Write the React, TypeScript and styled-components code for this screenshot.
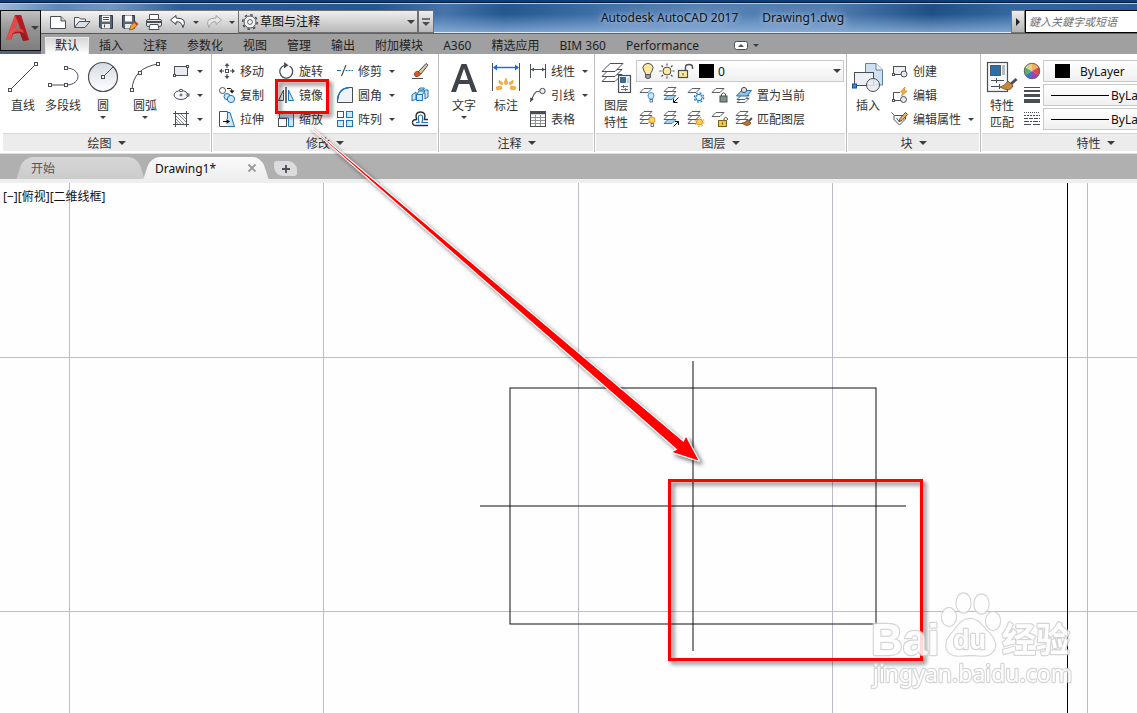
import React from "react";
import styled, { createGlobalStyle, css } from "styled-components";

const GlobalStyle = createGlobalStyle`
  *, *::before, *::after { box-sizing: border-box; }
  html, body { margin: 0; padding: 0; }
  body, button, input, select {
    font-family: "Noto Sans", "Noto Sans CJK SC", sans-serif;
    font-size: 12px;
  }
  button { border: 0; margin: 0; padding: 0; background: none; color: inherit; cursor: pointer; }
  svg { display: block; flex: none; }
`;

/* ---------- frame ---------- */
const Page = styled.div`
  position: relative;
  display: flex;
  flex-direction: column;
  min-height: 100vh;
  overflow: hidden;
  background: #fff;
  color: #222;
`;

const Header = styled.header`
  background:
    linear-gradient(180deg, #0f3d78 0 2px, #071a35 2px 3px, #b3cce8 3px 4px, transparent 4px),
    linear-gradient(180deg, transparent 0 14px, rgba(150, 185, 225, 0.75) 32px, #dce9f7 32px 33px, #54637a 33px),
    linear-gradient(100deg, #9db7d6 0, #5b86b8 60px, #7397c4 110px, #2d5d97 180px, #245690 370px, #4673aa 440px, #245690 500px, #3c6ca6 580px, #5580b3 680px, #4f7bb0 820px, #1f4f86 920px, #3467a0 1000px, #2a5a94 100%);
  padding-top: 10px;
`;

const HeaderMain = styled.div`
  display: flex;
`;

const AppButton = styled.button`
  display: flex;
  flex: none;
  align-items: center;
  width: 41px;
  height: 41px;
  padding: 0 0 6px 4px;
  gap: 1px;
  border: 1px solid #111;
  background: linear-gradient(180deg, #c0c0c0, #929292 50%, #7e7e7e);
`;

const HeaderColumn = styled.div`
  display: flex;
  flex: 1;
  flex-direction: column;
  min-width: 0;
`;

const TitleBar = styled.div`
  display: flex;
  height: 24px;
`;

const QuickAccess = styled.div`
  display: flex;
  flex: none;
  align-items: center;
  width: 197px;
  height: 24px;
  padding-left: 8px;
  gap: 6px;
  border-top: 1px solid #777;
  border-bottom: 1px solid #54585e;
  background: linear-gradient(180deg, #f4f4f4, #bdbdbd);
`;

const Workspace = styled.label`
  display: flex;
  flex: none;
  align-items: center;
  width: 180px;
  height: 23px;
  padding: 0 2px;
  gap: 1px;
  border: 1px solid #6f6f6f;
  background: linear-gradient(180deg, #eee, #b9b9b9);
`;

const PlainSelect = styled.select`
  flex: 1;
  min-width: 0;
  height: 18px;
  padding: 0;
  border: 0;
  outline: 0;
  appearance: none;
  background: transparent;
  color: #111;
`;

const CustomizeButton = styled.button`
  display: flex;
  flex: none;
  align-items: center;
  justify-content: center;
  width: 16px;
  height: 23px;
  border: 1px solid #6f6f6f;
  background: linear-gradient(180deg, #eee, #b9b9b9);
`;

const WindowTitle = styled.div`
  display: flex;
  flex: 1;
  justify-content: center;
  min-width: 0;
  gap: 24px;
  line-height: 16px;
  color: #0a1420;
  white-space: nowrap;
  text-shadow: 0 0 5px rgba(255, 255, 255, 0.6), 0 0 12px rgba(255, 255, 255, 0.6);
`;

const SearchArea = styled.div`
  display: flex;
  flex: none;
  width: 126px;
  height: 23px;
`;

const SearchToggle = styled.button`
  display: flex;
  align-items: center;
  justify-content: center;
  width: 14px;
  border: 1px solid #777;
  background: linear-gradient(180deg, #eee, #b4b4b4);
`;

const SearchInput = styled.input`
  flex: 1;
  min-width: 0;
  padding: 0 3px;
  border: 1px solid #000;
  border-right: 0;
  outline: 0;
  background: #fff;
  font-size: 11px;
  font-style: italic;
  &::placeholder { color: #6d6d6d; }
`;

const TabRow = styled.nav`
  display: flex;
  align-items: flex-end;
  height: 20px;
  padding-left: 4px;
  background: #a0a0a0;
`;

const RibbonTab = styled.button<{ $active?: boolean }>`
  flex: none;
  height: 17px;
  padding: 0 10px;
  line-height: 16px;
  color: #1f1f1f;
  ${(p) => p.$active && css`
    border: 1px solid #e9e9e9;
    border-bottom: 0;
    padding: 0 9px;
    background: linear-gradient(180deg, #d6d6d6, #fff);
  `}
`;

const MinimizeButton = styled.button`
  display: flex;
  align-items: center;
  height: 17px;
  margin-left: 25px;
  gap: 5px;
`;

/* ---------- ribbon ---------- */
const Ribbon = styled.section`
  display: flex;
  height: 100px;
  padding: 0 0 0 2px;
  overflow: hidden;
  border-bottom: 1px solid #dedede;
  background: #fff;
`;

const Panel = styled.section<{ $width: number }>`
  display: flex;
  flex: none;
  flex-direction: column;
  width: ${(p) => p.$width}px;
  height: 98px;
  border-right: 1px solid #bdbdbd;
`;

const PanelBody = styled.div`
  display: flex;
  height: 79px;
  padding: 5px 0 0 4px;
`;

const PanelFooter = styled.button`
  display: flex;
  align-items: center;
  justify-content: center;
  height: 18px;
  margin: 0 1px;
  gap: 6px;
  border-top: 1px solid #d6d6d6;
  background: #ececec;
  color: #333;
`;

const Caret = styled.span<{ $size?: number }>`
  flex: none;
  width: 0;
  height: 0;
  border: ${(p) => p.$size ?? 3}px solid transparent;
  border-top-color: #3a3f45;
  border-bottom: 0;
`;

const BigButton = styled.button<{ $width: number }>`
  display: flex;
  flex: none;
  flex-direction: column;
  align-items: center;
  width: ${(p) => p.$width}px;
  color: #333;
`;

const BigLabel = styled.span`
  margin: 3px 0 2px;
  line-height: 17px;
  white-space: pre;
`;

const Column = styled.div<{ $width?: number; $indent?: number }>`
  display: flex;
  flex: none;
  flex-direction: column;
  width: ${(p) => (p.$width ? `${p.$width}px` : "auto")};
  padding-left: ${(p) => p.$indent ?? 0}px;
`;

const SmallButton = styled.button`
  display: flex;
  align-items: center;
  height: 24px;
  gap: 4px;
  color: #333;
  white-space: nowrap;
  ${Caret} { margin-left: 3px; }
`;

const IconRow = styled.div`
  display: flex;
  align-items: center;
  height: 24px;
  padding-left: 3px;
  gap: 6px;
`;

const ComboRow = styled.div`
  display: flex;
  align-items: center;
  height: 24px;
  gap: 2px;
`;

const Combo = styled.label<{ $width: number }>`
  display: flex;
  flex: none;
  align-items: center;
  width: ${(p) => p.$width}px;
  height: 22px;
  padding: 0 2px;
  gap: 1px;
  border: 1px solid #c9c9c9;
  background: linear-gradient(180deg, #fff, #f0f0f0);
`;

const Swatch = styled.span<{ $wide?: boolean }>`
  flex: none;
  width: 15px;
  height: 14px;
  margin: ${(p) => (p.$wide ? "0 9px" : "0 3px")};
  background: #000;
`;

const LineSample = styled.span`
  flex: none;
  width: 58px;
  height: 1px;
  margin: 0 1px 0 5px;
  background: #000;
`;

/* ---------- document tabs ---------- */
const DocumentTabs = styled.nav`
  display: flex;
  align-items: flex-end;
  height: 29px;
  padding-left: 17px;
  border-bottom: 4px solid #eee;
  background: #b0b0b0;
`;

const DocumentTab = styled.div<{ $active?: boolean }>`
  position: relative;
  z-index: ${(p) => (p.$active ? 2 : 1)};
  display: flex;
  align-items: center;
  justify-content: space-between;
  width: ${(p) => (p.$active ? 124 : 127)}px;
  height: 22px;
  padding: 0 11px 0 ${(p) => (p.$active ? 11 : 14)}px;
  color: ${(p) => (p.$active ? "#111" : "#555")};
  &::before, &::after {
    content: "";
    position: absolute;
    z-index: -1;
    inset: 0 14px 0 3px;
    border-radius: 9px 9px 0 0;
    background: ${(p) => (p.$active ? "linear-gradient(180deg, #fafafa, #eee)" : "linear-gradient(180deg, #d6d6d6, #cbcbcb)")};
    transform: skewX(-18deg);
  }
  &::after {
    inset: 0 3px 0 14px;
    transform: skewX(18deg);
  }
`;

const NewTab = styled.button`
  display: flex;
  align-items: center;
  justify-content: center;
  width: 23px;
  height: 15px;
  margin: 0 0 3px 6px;
  border-radius: 3px 9px 3px 9px;
  background: #dcdcdc;
`;

/* ---------- drawing area ---------- */
const Canvas = styled.main`
  position: relative;
  flex: 1;
  min-height: 530px;
  background: #fefefe;
`;

const ViewControls = styled.div`
  position: absolute;
  top: 5px;
  left: 3px;
  display: flex;
  line-height: 18px;
  color: #111;
`;

const Drawing = styled.svg`
  position: absolute;
  inset: 0;
  width: 100%;
  height: 100%;
`;

const Overlay = styled.svg`
  position: absolute;
  z-index: 5;
  inset: 0;
  width: 100%;
  height: 100%;
  pointer-events: none;
`;

/* ---------- icons ---------- */
const D = "#4a4f56";
const B = "#1b74b8";
const LB = "#cfe6f5";

type IconProps = { w?: number; h?: number; children: React.ReactNode };
const Icon = ({ w = 18, h = 18, children }: IconProps) => (
  <svg width={w} height={h} viewBox={`0 0 ${w} ${h}`} fill="none" stroke={D} strokeWidth="1" aria-hidden="true">
    {children}
  </svg>
);
const Node = ({ x, y, s = 3 }: { x: number; y: number; s?: number }) => (
  <rect x={x - s / 2} y={y - s / 2} width={s} height={s} fill="#fff" strokeWidth="1" />
);
const Sheet = ({ x = 0, y = 0, fill = "#fff", stroke = D }: { x?: number; y?: number; fill?: string; stroke?: string }) => (
  <path d={`M${x + 1} ${y + 4.5}L${x + 5} ${y + 0.5}H${x + 13}L${x + 9} ${y + 4.5}Z`} fill={fill} stroke={stroke} strokeWidth=".9" />
);
const Stack = ({ blue }: { blue?: boolean }) => (
  <>
    <Sheet y={9} fill={blue ? "#a9d2ef" : "#fff"} stroke={blue ? B : D} />
    <Sheet y={5} />
    <Sheet y={1} />
  </>
);

const LogoA = () => (
  <svg width="25" height="28" viewBox="0 0 25 28" aria-hidden="true">
    <path d="M1 26L10 1H16L24 26L18 27L15 19L8 20L6 26Z" fill="#c5262b" />
    <path d="M10 1L13 8L6 26L1 26Z" fill="#e2494a" />
    <path d="M10 1H16L24 26L19 24L13 8Z" fill="#b31b21" />
    <path d="M6 26L8 18Q15 14 20 20L24 26L18 27L15 19Q11 18 8 20Z" fill="#9b1a20" />
    <path d="M9 16L13 8L15 15Q12 14 9 16Z" fill="#8f7576" />
    <path d="M4 20Q10 11 18 16L19 19Q11 15 3 23Z" fill="#e85c58" opacity=".65" />
  </svg>
);

const I = {
  fresh: <Icon><path d="M1.500 3.500H12L16.500 8V15.500H1.500Z" fill="#fff" /><path d="M12 3.500V8H16.500" fill="#ccd2d9" /></Icon>,
  open: <Icon><path d="M1.500 14.500V4.500H6L7.500 6H12.500V8.500" fill="#f3f5f7" /><path d="M1.500 14.500L6 8.500H17L12 14.500Z" fill="#d9dfe6" /></Icon>,
  save: <Icon><path d="M2.500 2.500H15.500V15.500H4L2.500 14Z" fill="#5a6673" stroke="#333a42" /><rect x="5" y="2.500" width="8" height="6" fill="#fff" stroke="none" /><rect x="5" y="11" width="8" height="4.500" fill="#e6ecf1" stroke="none" /><path d="M7.500 11.500V14.500M6 4.500H12M6 6.500H12" /></Icon>,
  saveAs: <Icon><path d="M1.500 2.500H13.500V15.500H3L1.500 14Z" fill="#5a6673" stroke="#333a42" /><rect x="4" y="2.500" width="7" height="6" fill="#fff" stroke="none" /><rect x="4" y="11" width="7" height="4.500" fill="#e6ecf1" stroke="none" /><path d="M8.500 17L9.500 13L14 8.500L17 11L12.500 16Z" fill="#f1a12c" stroke="#815010" strokeWidth=".8" /><path d="M14 8.500L17 11L15.800 12.200L12.800 9.700Z" fill="#b5433c" stroke="none" /></Icon>,
  print: <Icon><path d="M4.500 7V1.500H13.500V7" fill="#fff" /><rect x="1.500" y="6.500" width="15" height="7" rx="1.500" fill="#dfe4e9" /><path d="M2 9H16" strokeWidth="2" /><path d="M5 11.500H13L14 16.500H4Z" fill="#fff" /></Icon>,
  undo: <Icon><path d="M7 2.500L1.500 7L7 11.500V9Q12 7.500 14 14.500Q19 5 7 5Z" fill="#fff" stroke="#333a42" /></Icon>,
  redo: <Icon><g stroke="#a2a2a2"><path d="M11 2.500L16.500 7L11 11.500V9Q6 7.500 4 14.500Q-1 5 11 5Z" fill="#e7e7e7" /></g></Icon>,
  gear: <Icon><circle cx="9" cy="9" r="7.300" strokeDasharray="2.600 3.130" strokeWidth="1.600" /><circle cx="9" cy="9" r="6" fill="#f2f2f2" strokeWidth=".9" /><circle cx="9" cy="9" r="2.400" fill="#fff" strokeWidth=".9" /></Icon>,

  line: <Icon w={34} h={35}><path d="M4 31L30 5" /><Node x={4} y={31} /><Node x={30} y={5} /></Icon>,
  pline: <Icon w={34} h={35}><path d="M4 26H20M20 9C36 9 36 26 20 26" /><Node x={4} y={26} /><Node x={20} y={26} /><Node x={20} y={9} /></Icon>,
  circle: (
    <Icon w={34} h={35}>
      <defs><linearGradient id="disc" x2="0" y2="1"><stop stopColor="#d5dbe2" /><stop offset="1" stopColor="#fff" /></linearGradient></defs>
      <circle cx="17" cy="18" r="14.500" fill="url(#disc)" strokeWidth="1.200" /><path d="M17 18L27 8" /><Node x={17} y={18} />
    </Icon>
  ),
  arc: <Icon w={34} h={35}><path d="M4 31Q5 9 30 5" /><Node x={4} y={31} /><Node x={12} y={14} /><Node x={30} y={5} /></Icon>,
  rect: <Icon><rect x="2.500" y="4.500" width="13" height="9" fill="#e8ebef" /><Node x={2.5} y={13.5} s={2} /><Node x={15.5} y={4.5} s={2} /></Icon>,
  ellipse: <Icon><ellipse cx="9" cy="9" rx="7" ry="4.500" fill="#f4f6f8" /><path d="M7.500 9H10.500M9 7.500V10.500" /><Node x={9} y={4.5} s={2} /><Node x={16} y={9} s={2} /></Icon>,
  hatch: <Icon><path d="M3.500 1V17M14.500 1V17M1 3.500H17M1 14.500H17" /><path d="M4 6L12 14M4 9L9 14M6 4L14 12M9 4L14 9M4 12L6 14" strokeWidth=".7" /></Icon>,

  move: <Icon><rect x="7.500" y="7.500" width="3" height="3" fill="#fff" /><path d="M9 6V3M9 12V15M6 9H3M12 9H15" strokeWidth="1.200" /><path d="M6.500 4L9 1L11.500 4ZM6.500 14L9 17L11.500 14ZM4 6.500L1 9L4 11.500ZM14 6.500L17 9L14 11.500Z" fill={D} stroke="none" /></Icon>,
  copy: <Icon><circle cx="4.500" cy="4.500" r="3" fill="#fff" /><path d="M9 2.500H12.500Q14 3 14 5" stroke="#111" /><path d="M11.500 4.500H16.500L14 7.500Z" fill="#111" stroke="none" /><g stroke={B} fill={LB}><circle cx="9" cy="10.500" r="3" /><circle cx="13" cy="13" r="3.600" /></g></Icon>,
  stretch: <Icon><path d="M8.500 2.500H12L16.500 16.500H8.500Z" fill={LB} stroke={B} /><path d="M9.500 1.500H1.500V16.500H9.500" fill="#fff" /><path d="M9.500 1.500V9" stroke={B} /><path d="M5 11.500H9" stroke="#111" /><path d="M8.500 9L12 11.500L8.500 14Z" fill="#111" stroke="none" /></Icon>,
  rotate: <Icon><path d="M7 3.500A6.500 6.500 0 1 0 12.500 4" strokeWidth="1.300" /><path d="M7 0L11.500 3.200L7 6.500Z" fill={D} stroke="none" /></Icon>,
  mirror: <Icon><path d="M6.500 4V14.500H1.500Z" fill="#f2f2f2" /><path d="M11.500 4V14.500H16.500Z" fill={LB} stroke={B} /><path d="M9 1V17" stroke="#111" strokeWidth="1.200" /></Icon>,
  scale: <Icon><path d="M2.500 2.500H16.500V16.500H11.500V8H2.500Z" fill={LB} stroke={B} /><rect x="1.500" y="8.500" width="8" height="8" fill="#fff" /></Icon>,
  trim: <Icon><path d="M1 8.500H5" stroke={B} /><path d="M5.500 14L10 3" strokeWidth="1.200" /><path d="M9.500 8.500H17" strokeDasharray="2 1" stroke={B} /></Icon>,
  fillet: <Icon><path d="M1.500 16.500V14Q2.500 2.500 13 1.500H16.500V16.500Z" fill="#f0f2f5" /><path d="M1.500 14Q2.500 2.500 13 1.500" stroke={B} strokeWidth="1.400" /></Icon>,
  array: <Icon><rect x="1.500" y="1.500" width="6" height="6" fill="#fff" /><g stroke={B} fill={LB}><rect x="10.500" y="1.500" width="6" height="6" /><rect x="1.500" y="10.500" width="6" height="6" /><rect x="10.500" y="10.500" width="6" height="6" /></g></Icon>,
  erase: <Icon><path d="M7 10L15 1.500L17 3L10 12Z" fill="#dac59b" /><path d="M3.500 11Q5 8.500 7.500 9.500L9.500 12Q8 15.500 4.500 14.500Q2.500 13 3.500 11Z" fill="#d25a25" stroke="#8d3616" strokeWidth=".8" /><path d="M1 16.500H12" /></Icon>,
  explode: <Icon><g stroke={B} fill={LB}><path d="M11 7L13.500 4H17V11L14 13V7Z" /><path d="M5.500 8.500H11.500V14.500H5.500ZM5.500 8.500L8 5H14L11.500 8.500" /><path d="M1 9L5 6V13L1 15ZM7 4L9 2H13.500L12 4Z" /></g></Icon>,
  offset: <Icon><path d="M1.500 12.500Q1.500 9.500 5.500 9.500Q3.500 2 9.500 2Q15.500 2 13.500 9.500H17" stroke="#2c3036" strokeWidth="1.400" /><path d="M1.500 12.500Q1.500 15.500 5 15.500H17" stroke="#2c3036" strokeWidth="1.400" /><path d="M5 12.500H8Q6 5 9.500 5Q13 5 11 12.500H17" stroke={B} strokeWidth="1.200" /></Icon>,

  text: <Icon w={34} h={35}><path d="M4 33L14.500 5H19.500L30 33H25L22.200 25H11.800L9 33ZM13 21H21L17 9.500Z" fill="#3f444b" stroke="none" fillRule="evenodd" /></Icon>,
  dim: <Icon w={34} h={35}><path d="M3.500 4V32M30.500 4V32" /><path d="M5 8.500H29" stroke="#1668e8" strokeWidth="1.400" /><path d="M4 8.500L8 5.500V11.500ZM30 8.500L26 5.500V11.500Z" fill="#1668e8" stroke="none" /><path d="M17 19L19 24L17 26L15 24ZM10 21L14 24L13 26L10 24ZM24 21L20 24L21 26L24 24ZM7 28L12 27L13 30L8 31ZM27 28L22 27L21 30L26 31Z" fill="#f2b244" stroke="#e58c1e" strokeWidth=".5" /></Icon>,
  linear: <Icon><path d="M1.500 2V16M16.500 2V16M2 7.500H16" /><path d="M2 7.500L5 5.500V9.500ZM16 7.500L13 5.500V9.500Z" fill={D} stroke="none" /></Icon>,
  leader: <Icon><circle cx="13.500" cy="5" r="2.700" fill="#eee" /><path d="M2.500 14Q5.500 6 8 5.500H10.500" strokeWidth="1.200" /><path d="M1 16.500L1.200 11.500L4.800 13Z" fill={D} stroke="none" /></Icon>,
  table: <Icon><rect x="1.500" y="1.500" width="15" height="15" fill="#fff" /><path d="M1.500 3H16.500" strokeWidth="2.500" /><path d="M2 7.500H16M2 10.500H16M2 13.500H16M6.500 5V16M11.500 5V16" stroke="#8d939a" /></Icon>,

  layers: <Icon w={34} h={35}><g fill="#fff"><path d="M3 22.500L10 15.500H23L16 22.500Z" /><path d="M3 17.500L10 10.500H23L16 17.500Z" /><path d="M3 12.500L11 4.500H24L16 12.500Z" /></g><rect x="19.500" y="16.500" width="12" height="17" fill="#f6f8fa" strokeWidth="1.200" /><rect x="21.500" y="18.500" width="5" height="5" fill={B} strokeWidth=".8" /><path d="M29 19V24" stroke="#9da7b0" /><path d="M22 27.500H29M22 30.500H29M24.500 26V29M26.500 29V32" strokeWidth=".8" /></Icon>,
  bulb: <Icon><path d="M6.500 12.500Q6.500 11 5 9Q2.500 5 5.500 2.500Q9 0 12.500 2.500Q15.500 5 13 9Q11.500 11 11.500 12.500Z" fill="#ffe79b" /><path d="M6.500 12.500H11.500V15.500Q9 18 6.500 15.500Z" fill="#999" strokeWidth=".9" /></Icon>,
  sun: <Icon><circle cx="9" cy="9" r="4" fill="#ffe79b" /><path d="M9 1.500V3.500M9 14.500V16.500M1.500 9H3.500M14.500 9H16.500M3.500 3.500L5 5M13 13L14.500 14.500M3.500 14.500L5 13M13 5L14.500 3.500" strokeWidth="1.200" /></Icon>,
  unlock: <Icon><rect x="1.500" y="8.500" width="9" height="7" fill="#ffe79b" strokeWidth="1.200" /><path d="M8.500 8V5Q8.500 2.500 12 2.500Q15.500 2.500 15.500 5V7" strokeWidth="1.400" /><path d="M6 11V13.500" /></Icon>,
  layOff: <Icon><Sheet y={2} /><path d="M10.500 13Q8 10 9.500 7.500Q12 5.500 14.500 7.500Q16 10 13.500 13Z" fill="#cde6fb" stroke="#3b8ed0" /><path d="M11 13.500H13.500V16H11Z" strokeWidth=".8" /></Icon>,
  layIso: <Icon><Stack blue /><path d="M15.500 11.500L11 16M10.500 12.500V16.500H14.500" stroke="#111" /></Icon>,
  layFreeze: <Icon><Sheet y={2} /><g stroke={B} fill="#e5f2fc"><circle cx="12" cy="11.500" r="4.700" strokeDasharray="1.800 1.900" strokeWidth="1.200" /><circle cx="12" cy="11.500" r="3.200" /></g></Icon>,
  layLock: <Icon><Sheet y={2} /><path d="M10.500 10V8Q12.500 5.500 14.500 8V10" /><rect x="9" y="10" width="7" height="6" fill="#7d9286" /></Icon>,
  layCurrent: <Icon><Sheet x={1} y={12} /><Sheet x={1} y={9} /><path d="M1.500 10L6.500 4.500H16.500L12 10Z" fill="#8fc6ec" stroke={B} /><circle cx="9" cy="4" r="2.600" fill="#dce4ea" /></Icon>,
  layOn: <Icon><Stack /><path d="M11.500 13Q9 10.500 10.500 8Q13 6 15.500 8Q17 10.500 14.500 13Z" fill="#ffd45f" stroke="#e8901a" /><path d="M12 13.500H14.500V16.500H12Z" strokeWidth=".8" /></Icon>,
  layUniso: <Icon><Stack blue /><path d="M10.500 16.500L15.500 11.500M12 11.500H15.500V15" stroke="#111" /></Icon>,
  layThaw: <Icon><Stack /><circle cx="12.500" cy="12" r="4.500" stroke="#e08a1c" strokeDasharray="1.500 2.030" /><circle cx="12.500" cy="12" r="3" fill="#ffd74f" stroke="#e08a1c" /></Icon>,
  layUnlock: <Icon><Sheet y={2} /><path d="M13 10.500V8.500Q14.500 6 16.500 8.500V10" /><rect x="7.500" y="10.500" width="8" height="6" fill="#f4c440" stroke="#7b641a" /><path d="M11.500 12.500V14.500" /></Icon>,
  layMatch: <Icon><Stack /><path d="M17 8L14 11" strokeWidth="1.800" /><path d="M7 13Q11 13 12.500 10L16 13Q13 18 7 13Z" fill="#b87333" stroke="#75461a" strokeWidth=".8" /></Icon>,

  insert: <Icon w={34} h={35}><path d="M14.500 4.500H25L31.500 11V26H14.500Z" fill="#cfe0f1" stroke="#62809f" /><path d="M25 4.500V11H31.500" fill="#f5f9fc" stroke="#62809f" /><rect x="3.500" y="13.500" width="19" height="13" fill="#eceff3" /><circle cx="22" cy="26" r="6.500" fill="#e7ebef" fillOpacity=".85" /><rect x="1.500" y="25" width="4" height="4" fill="#3f87dd" stroke="#174f94" /></Icon>,
  create: <Icon><rect x="2.500" y="4.500" width="12" height="8" fill="#eef0f3" /><circle cx="13" cy="12" r="3" fill="#e4e8ec" /><Node x={2.5} y={12.5} s={2} /></Icon>,
  edit: <Icon><path d="M9 6.500H2.500V14.500H10" /><circle cx="12.500" cy="13.500" r="3" fill="#e4e8ec" /><Node x={2.5} y={14.5} s={2} /><path d="M14 1L9.500 6H12L10.500 10L16 5H13Z" fill="#ffb42e" stroke="#dc861a" strokeWidth=".8" /></Icon>,
  attrs: <Icon><path d="M.5 2.500L3.500 5.500H14.500V9L8.500 15L3 9.500V5.500" fill="#fff" /><path d="M5.500 8L8 11.500" /><path d="M8 11.500L9 8.500L14.500 2.500L16.500 4.500L11 10.500Z" fill="#f6b45a" stroke="#3b3b3b" strokeWidth=".9" /></Icon>,

  match: <Icon w={34} h={35}><rect x="2.500" y="3.500" width="20" height="29" fill="#f6f8fa" strokeWidth="1.200" /><rect x="5.500" y="6.500" width="10" height="10" fill="#2d6da8" strokeWidth=".9" /><path d="M18.500 6V16" stroke="#b3bbc3" strokeWidth="3" /><path d="M6 21.500H19M6 27.500H15M11.500 19V24M14.500 25V30" /><path d="M31.500 20L26 25" strokeWidth="3" /><path d="M15 28Q20 27 23 22L28 27Q25 34 15 28Z" fill="#c78a3a" stroke="#855522" strokeWidth=".9" /></Icon>,
  color: <Icon><g stroke="none"><path d="M9 9V1A8 8 0 0 1 16 5Z" fill="#f3ae62" /><path d="M9 9L16 5A8 8 0 0 1 16 13Z" fill="#e0484a" /><path d="M9 9L16 13A8 8 0 0 1 9 17Z" fill="#9b45ad" /><path d="M9 9V17A8 8 0 0 1 2 13Z" fill="#3f72d3" /><path d="M9 9L2 13A8 8 0 0 1 2 5Z" fill="#52b567" /><path d="M9 9L2 5A8 8 0 0 1 9 1Z" fill="#dfd58a" /></g><circle cx="9" cy="9" r="7.700" stroke="#6d6460" /></Icon>,
  weight: <Icon><path d="M1 1.500H17" /><path d="M1 5H17" strokeWidth="2" /><path d="M1 9.500H17" strokeWidth="3" /><path d="M1 15H17" strokeWidth="4" /></Icon>,
  ltype: <Icon><path d="M1 2.500H17" strokeDasharray="1 1" /><path d="M1 5.500H17" strokeDasharray="2 1" /><path d="M1 8.500H17" strokeDasharray="4 1" /><path d="M1 11.500H17" strokeDasharray="5 1 2 1" /><path d="M1 14.500H17" strokeDasharray="7 2" /></Icon>,
};

/* ---------- composed controls ---------- */
const Big = ({ icon, label, width, menu }: { icon: React.ReactNode; label: string; width: number; menu?: boolean }) => (
  <BigButton $width={width}>
    {icon}
    <BigLabel>{label}</BigLabel>
    {menu && <Caret />}
  </BigButton>
);

const Small = ({ icon, label, menu, name }: { icon: React.ReactNode; label?: string; menu?: boolean; name?: string }) => (
  <SmallButton aria-label={name}>
    {icon}
    {label}
    {menu && <Caret />}
  </SmallButton>
);

const RibbonPanel = ({ title, width, children }: { title: string; width: number; children: React.ReactNode }) => (
  <Panel $width={width}>
    <PanelBody>{children}</PanelBody>
    <PanelFooter>
      {title}
      <Caret $size={4} />
    </PanelFooter>
  </Panel>
);

const tabs = ["默认", "插入", "注释", "参数化", "视图", "管理", "输出", "附加模块", "A360", "精选应用", "BIM 360", "Performance"];
const gridX = [69, 323, 578, 832, 1087];
const gridY = [174, 428];

const quick: [string, React.ReactNode][] = [
  ["新建", I.fresh], ["打开", I.open], ["保存", I.save], ["另存为", I.saveAs], ["打印", I.print], ["放弃", I.undo],
];

export default function App() {
  return (
    <>
      <GlobalStyle />
      <Page>
        <Header>
          <HeaderMain>
            <AppButton aria-label="应用程序菜单"><LogoA /><Caret $size={4} /></AppButton>
            <HeaderColumn>
              <TitleBar>
                <QuickAccess>
                  {quick.map(([name, icon]) => <button key={name} aria-label={name}>{icon}</button>)}
                  <Caret />
                  <button aria-label="重做">{I.redo}</button>
                  <Caret />
                </QuickAccess>
                <Workspace>
                  {I.gear}
                  <PlainSelect aria-label="工作空间"><option>草图与注释</option></PlainSelect>
                  <Caret $size={4} />
                </Workspace>
                <CustomizeButton aria-label="自定义快速访问工具栏">
                  <Icon w={10} h={10}><path d="M1 2H9" strokeWidth="1.500" /><path d="M1 5H9L5 9Z" fill={D} stroke="none" /></Icon>
                </CustomizeButton>
                <WindowTitle><span>Autodesk AutoCAD 2017</span><span>Drawing1.dwg</span></WindowTitle>
                <SearchArea>
                  <SearchToggle aria-label="搜索"><Icon w={6} h={8}><path d="M1 0L5 4L1 8Z" fill="#222" stroke="none" /></Icon></SearchToggle>
                  <SearchInput aria-label="键入关键字或短语" placeholder="鍵入关鍵字或短语" />
                </SearchArea>
              </TitleBar>
              <TabRow>
                {tabs.map((t, i) => <RibbonTab key={t} $active={i === 0}>{t}</RibbonTab>)}
                <MinimizeButton aria-label="最小化功能区">
                  <Icon w={14} h={9}><rect x=".5" y=".5" width="13" height="8" rx="2" fill="#fff" /><path d="M4 6L7 3L10 6Z" fill={D} stroke="none" /></Icon>
                  <Caret />
                </MinimizeButton>
              </TabRow>
            </HeaderColumn>
          </HeaderMain>
        </Header>

        <Ribbon>
          <RibbonPanel title="绘图" width={210}>
            <Big icon={I.line} label="直线" width={34} />
            <Big icon={I.pline} label="多段线" width={46} />
            <Big icon={I.circle} label="圆" width={34} menu />
            <Big icon={I.arc} label="圆弧" width={50} menu />
            <Column $indent={2}>
              <Small icon={I.rect} name="矩形" menu />
              <Small icon={I.ellipse} name="椭圆" menu />
              <Small icon={I.hatch} name="图案填充" menu />
            </Column>
          </RibbonPanel>

          <RibbonPanel title="修改" width={227}>
            <Column $width={61} $indent={2}>
              <Small icon={I.move} label="移动" />
              <Small icon={I.copy} label="复制" />
              <Small icon={I.stretch} label="拉伸" />
            </Column>
            <Column $width={59}>
              <Small icon={I.rotate} label="旋转" />
              <Small icon={I.mirror} label="镜像" />
              <Small icon={I.scale} label="缩放" />
            </Column>
            <Column $width={75}>
              <Small icon={I.trim} label="修剪" menu />
              <Small icon={I.fillet} label="圆角" menu />
              <Small icon={I.array} label="阵列" menu />
            </Column>
            <Column>
              <Small icon={I.erase} name="删除" />
              <Small icon={I.explode} name="分解" />
              <Small icon={I.offset} name="偏移" />
            </Column>
          </RibbonPanel>

          <RibbonPanel title="注释" width={156}>
            <Big icon={I.text} label="文字" width={42} menu />
            <Big icon={I.dim} label="标注" width={42} />
            <Column $indent={2}>
              <Small icon={I.linear} label="线性" menu />
              <Small icon={I.leader} label="引线" menu />
              <Small icon={I.table} label="表格" />
            </Column>
          </RibbonPanel>

          <RibbonPanel title="图层" width={252}>
            <Big icon={I.layers} label={"图层\n特性"} width={34} />
            <Column $indent={3}>
              <ComboRow>
                <Combo $width={208}>
                  {I.bulb}{I.sun}{I.unlock}
                  <Swatch />
                  <PlainSelect aria-label="图层"><option>0</option></PlainSelect>
                  <Caret $size={4} />
                </Combo>
              </ComboRow>
              <IconRow>
                <button aria-label="关">{I.layOff}</button>
                <button aria-label="隔离">{I.layIso}</button>
                <button aria-label="冻结">{I.layFreeze}</button>
                <button aria-label="锁定">{I.layLock}</button>
                <Small icon={I.layCurrent} label="置为当前" />
              </IconRow>
              <IconRow>
                <button aria-label="打开所有图层">{I.layOn}</button>
                <button aria-label="取消隔离">{I.layUniso}</button>
                <button aria-label="解冻所有图层">{I.layThaw}</button>
                <button aria-label="解锁">{I.layUnlock}</button>
                <Small icon={I.layMatch} label="匹配图层" />
              </IconRow>
            </Column>
          </RibbonPanel>

          <RibbonPanel title="块" width={134}>
            <Big icon={I.insert} label="插入" width={34} />
            <Column $indent={6}>
              <Small icon={I.create} label="创建" />
              <Small icon={I.edit} label="编辑" />
              <Small icon={I.attrs} label="编辑属性" menu />
            </Column>
          </RibbonPanel>

          <RibbonPanel title="特性" width={230}>
            <Big icon={I.match} label={"特性\n匹配"} width={34} />
            <Column $indent={4}>
              <ComboRow>
                {I.color}
                <Combo $width={160}><Swatch $wide /><PlainSelect aria-label="对象颜色"><option>ByLayer</option></PlainSelect><Caret $size={4} /></Combo>
              </ComboRow>
              <ComboRow>
                {I.weight}
                <Combo $width={160}><LineSample /><PlainSelect aria-label="线宽"><option>ByLayer</option></PlainSelect><Caret $size={4} /></Combo>
              </ComboRow>
              <ComboRow>
                {I.ltype}
                <Combo $width={160}><LineSample /><PlainSelect aria-label="线型"><option>ByLayer</option></PlainSelect><Caret $size={4} /></Combo>
              </ComboRow>
            </Column>
          </RibbonPanel>
        </Ribbon>

        <DocumentTabs>
          <DocumentTab>开始</DocumentTab>
          <DocumentTab $active>
            <span>Drawing1*</span>
            <button aria-label="关闭"><Icon w={10} h={10}><path d="M1.500 1.500L8.500 8.500M8.500 1.500L1.500 8.500" stroke="#999" strokeWidth="1.800" /></Icon></button>
          </DocumentTab>
          <NewTab aria-label="新图形"><Icon w={10} h={10}><path d="M5 1V9M1 5H9" strokeWidth="1.800" /></Icon></NewTab>
        </DocumentTabs>

        <Canvas>
          <Drawing aria-label="图形">
            <g stroke="#bcbcc4" shapeRendering="crispEdges">
              {gridX.map((x) => <line key={x} x1={x} x2={x} y1="0" y2="100%" />)}
              {gridY.map((y) => <line key={y} x1="0" x2="100%" y1={y} y2={y} />)}
            </g>
            <g stroke="#111" fill="none">
              <rect x="510" y="205" width="366" height="236" />
              <line x1="693" x2="693" y1="178" y2="468" />
              <line x1="480" x2="906" y1="323" y2="323" />
              <line x1="1067.500" x2="1067.500" y1="0" y2="100%" stroke="#000" />
            </g>
          </Drawing>
          <ViewControls><span>[−]</span><span>[俯视]</span><span>[二维线框]</span></ViewControls>
        </Canvas>

        <Overlay aria-hidden="true">
          <defs>
            <filter id="shade" x="-20%" y="-20%" width="140%" height="140%">
              <feDropShadow dx="3" dy="3" stdDeviation="2" floodColor="#000" floodOpacity=".55" />
            </filter>
          </defs>
          <g fill="none" stroke="#f00" strokeWidth="3" filter="url(#shade)">
            <rect x="276.500" y="80.500" width="51" height="32" />
            <rect x="669.500" y="480.500" width="252" height="179" />
          </g>
          <path
            d="M309 126L683.500 442L686 437L698.500 460.500L672.500 452L677.500 449.500Z"
            fill="#f00" stroke="#fff" strokeWidth="2" paintOrder="stroke" strokeLinejoin="round" filter="url(#shade)"
          />
          <g fill="#fff" stroke="#cfcfcf" strokeWidth="2.400" paintOrder="stroke" strokeLinejoin="round" opacity=".85">
            <text x="871" y="655" fontSize="44" fontWeight="700" fontFamily="Liberation Sans, sans-serif">Bai</text>
            <ellipse cx="949" cy="617" rx="7" ry="9" />
            <ellipse cx="963.500" cy="603" rx="7" ry="9.500" />
            <ellipse cx="981.500" cy="604" rx="7" ry="9.500" />
            <ellipse cx="993" cy="621" rx="7" ry="9" />
            <path d="M970 619C978 619 981 625 987 631C994 638 998 645 993 651C988 658 979 655 971 655C963 655 952 658 948 651C944 644 948 637 954 631C959 625 962 619 970 619Z" />
            <text x="953" y="649" fontSize="27" fontWeight="700" fontFamily="Liberation Sans, sans-serif">du</text>
            <text x="1002" y="652" fontSize="34" fontWeight="700" fontFamily="Noto Sans CJK SC, sans-serif">经验</text>
            <text x="873" y="682" fontSize="23" fontFamily="Noto Sans, sans-serif">jingyan.baidu.com</text>
          </g>
        </Overlay>
      </Page>
    </>
  );
}
